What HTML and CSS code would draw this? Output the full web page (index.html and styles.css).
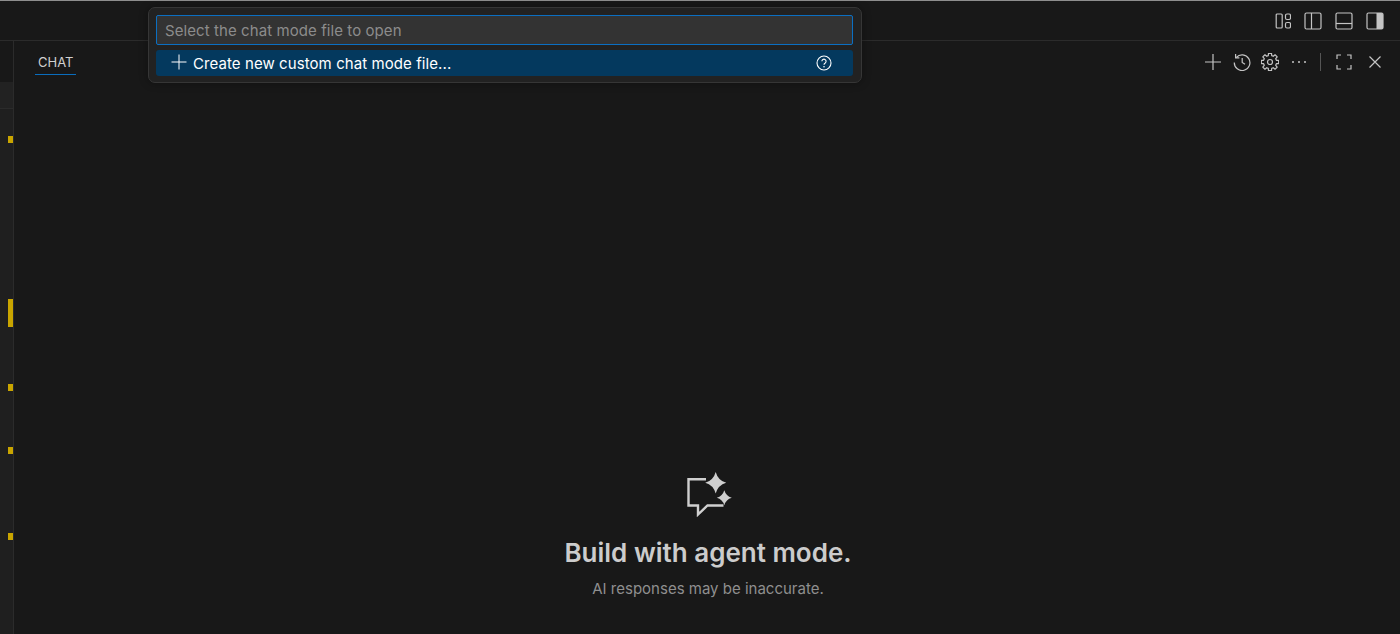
FILE: index.html
```html
<!DOCTYPE html>
<html lang="en">
<head>
<meta charset="utf-8">
<title>Chat</title>
<link rel="stylesheet" href="styles.css">
</head>
<body>
<div class="window">
  <header class="titlebar">
    <div class="layout-icons">
      <svg class="icon" viewBox="0 0 18 18"><rect x="3.200" y="2" width="6" height="14" rx="1"/><rect x="12.500" y="2" width="5" height="5.500" rx="1.500"/><rect x="12.500" y="10.500" width="5" height="5.500" rx="1.500"/></svg>
      <svg class="icon" viewBox="0 0 18 18"><rect x="1" y="1" width="16" height="16" rx="1.500"/><path d="M7.500 1v16"/></svg>
      <svg class="icon" viewBox="0 0 18 18"><rect x="1" y="1" width="16" height="16" rx="1.500"/><path d="M1 11.500h16"/></svg>
      <svg class="icon" viewBox="0 0 18 18"><rect x="1" y="1" width="16" height="16" rx="1.500"/><path class="filled" d="M10.500 1h5a1.500 1.500 0 0 1 1.500 1.500v13a1.500 1.500 0 0 1-1.500 1.500h-5z"/></svg>
    </div>
  </header>
  <div class="main">
    <aside class="gutter">
      <div class="gutter-tabs"></div>
      <div class="gutter-band"></div>
      <div class="gutter-track">
        <i class="mark m1"></i>
        <i class="mark m2"></i>
        <i class="mark m3"></i>
        <i class="mark m4"></i>
        <i class="mark m5"></i>
      </div>
    </aside>
    <section class="panel">
      <div class="panel-head">
        <div class="panel-tab">CHAT</div>
        <div class="panel-actions">
          <svg class="icon" viewBox="0 0 18 18"><path d="M9 1v16M1 9h16"/></svg>
          <svg class="icon" viewBox="0 0 18 18"><path d="M3.300 4.500A7.800 7.800 0 1 1 1.300 9.500"/><path d="M2.600 1v3.800h3.800"/><path d="M9.200 5v4.400l2.800 1.800"/></svg>
          <svg class="icon gear" viewBox="0 0 18 18"><path d="M7.470 .33H10.530L10.710 2.620 12.300 3.280 14.050 1.790 16.210 3.950 14.720 5.700 15.380 7.290 17.670 7.470V10.530L15.380 10.710 14.720 12.300 16.210 14.050 14.050 16.210 12.300 14.720 10.710 15.380 10.530 17.670H7.470L7.290 15.380 5.700 14.720 3.950 16.210 1.790 14.050 3.280 12.300 2.620 10.710 .33 10.530V7.470L2.620 7.290 3.280 5.700 1.790 3.950 3.950 1.790 5.700 3.280 7.290 2.620z"/><circle cx="9" cy="9" r="2.500"/></svg>
          <svg class="icon" viewBox="0 0 18 18"><circle class="filled" cx="3" cy="9" r="1"/><circle class="filled" cx="9" cy="9" r="1"/><circle class="filled" cx="15" cy="9" r="1"/></svg>
          <span class="divider"></span>
          <svg class="icon" viewBox="0 0 18 18"><path d="M2 6V2h4M12 2h4v4M16 12v4h-4M6 16H2v-4"/></svg>
          <svg class="icon close" viewBox="0 0 18 18"><path d="M3.500 3.500l11 11M14.500 3.500l-11 11"/></svg>
        </div>
      </div>
      <div class="welcome">
        <svg class="welcome-icon" viewBox="0 0 46 46"><path class="bubble" d="M19 8.200H1.500v26.300H11V43.500L20.500 34.500H36.500"/><path class="spark" d="M28.700 .9Q31 9.400 39.200 11.700 31 14 28.700 22.500 26.400 14 18.200 11.700 26.400 9.400 28.700 .9z"/><path class="spark" d="M37.300 19.200Q39 25 44.800 26.700 39 28.400 37.300 34.200 35.600 28.400 29.800 26.700 35.600 25 37.300 19.200z"/></svg>
        <h1 class="welcome-title">Build with agent mode.</h1>
        <p class="welcome-note">AI responses may be inaccurate.</p>
      </div>
    </section>
  </div>
  <div class="quickpick">
    <div class="qp-input">Select the chat mode file to open</div>
    <div class="qp-row">
      <svg class="qp-plus" viewBox="0 0 16 16"><path d="M8 .5v15M.5 8h15"/></svg>
      <span class="qp-label">Create new custom chat mode file...</span>
      <svg class="qp-help" viewBox="0 0 16 16"><circle cx="8" cy="8" r="7"/><path d="M5.900 6.300a2.100 2.100 0 1 1 3.300 1.700c-.8.500-1.200 1-1.200 1.800"/><circle class="dot" cx="8" cy="11.800" r=".8"/></svg>
    </div>
  </div>
</div>
</body>
</html>
```
FILE: styles.css
```css
* { box-sizing: border-box; }
html, body { margin: 0; height: 100%; background: #181818; overflow: hidden; }
body { font-family: Inter, "Liberation Sans", sans-serif; color: #ccc; }
.window { position: relative; height: 634px; display: flex; flex-direction: column; border-top: 1px solid #8e8e8e; }
.titlebar { height: 40px; flex: none; display: flex; justify-content: flex-end; align-items: center; border-bottom: 1px solid #2b2b2b; padding: 0 16px 0 0; }
.layout-icons { display: flex; gap: 13px; }
.icon { width: 18px; height: 18px; fill: none; stroke: #c4c4c4; stroke-width: 1.200; display: block; }
.icon .filled { fill: #c4c4c4; stroke: none; }
.gear { margin-left: -1px; stroke-linejoin: round; }
.close { margin-left: 2px; }
.main { flex: 1; display: flex; min-height: 0; }
.gutter { width: 14px; flex: none; border-right: 1px solid #2b2b2b; display: flex; flex-direction: column; background: #1f1f1f; }
.gutter-tabs { height: 41px; flex: none; background: #181818; }
.gutter-band { height: 27px; flex: none; background: #222222; border-bottom: 1px solid #2b2b2b; }
.gutter-track { flex: 1; display: flex; flex-direction: column; align-items: flex-end; }
.mark { display: block; width: 5px; background: #c9a500; }
.m1 { height: 7px; margin-top: 27px; }
.m2 { height: 28px; margin-top: 156px; }
.m3 { height: 7px; margin-top: 57px; }
.m4 { height: 7px; margin-top: 56px; }
.m5 { height: 7px; margin-top: 79px; }
.panel { flex: 1; display: flex; flex-direction: column; min-width: 0; }
.panel-head { height: 41px; flex: none; display: flex; justify-content: space-between; align-items: center; padding: 0 16px 0 21px; }
.panel-tab { font-size: 13px; line-height: 16px; color: #d0d0d0; padding: 5px 3px 4px; border-bottom: 1px solid #0a6dbd; margin-top: 1px; }
.panel-actions { display: flex; align-items: center; gap: 11px; }
.divider { width: 1px; height: 18px; background: #555; margin: 0 3px 0 1px; }
.welcome { flex: 1; display: flex; flex-direction: column; align-items: center; justify-content: flex-end; padding: 0 0 36px 2px; }
.welcome-icon { width: 46px; height: 46px; fill: none; display: block; margin-left: 4px; }
.bubble { stroke: #cfcfcf; stroke-width: 2.400; fill: none; }
.spark { fill: #cfcfcf; }
.welcome-title { font-size: 26px; line-height: 32px; font-weight: 600; margin: 20px 0 0; color: #cccccc; }
.welcome-note { font-size: 15px; line-height: 18px; color: #8f8f8f; margin: 11px 0 0; }
.quickpick { position: absolute; left: 148px; top: 6px; width: 714px; height: 76px; background: #222222; border: 1px solid #363636; border-radius: 7px; padding: 7px 8px 0 7px; box-shadow: 0 0 8px rgba(0,0,0,.35); }
.qp-input { height: 30px; background: #333333; border: 1px solid #0b6fc2; border-radius: 2px; font-size: 15px; line-height: 26px; padding: 2px 0 0 8px; color: #8c8c8c; letter-spacing: .08px; }
.qp-row { height: 26px; margin-top: 5px; background: #04395e; border-radius: 3px; display: flex; align-items: center; padding: 0 21px 0 15px; color: #fff; }
.qp-plus { width: 16px; height: 16px; fill: none; stroke: #fff; stroke-width: 1; flex: none; margin-top: -3px; }
.qp-label { font-size: 15px; line-height: 18px; margin: 2px 0 0 6px; flex: 1; letter-spacing: .08px; }
.qp-help { width: 16px; height: 16px; fill: none; stroke: #fff; stroke-width: 1.100; flex: none; margin-top: -1px; }
.qp-help .dot { fill: #fff; stroke: none; }
```
